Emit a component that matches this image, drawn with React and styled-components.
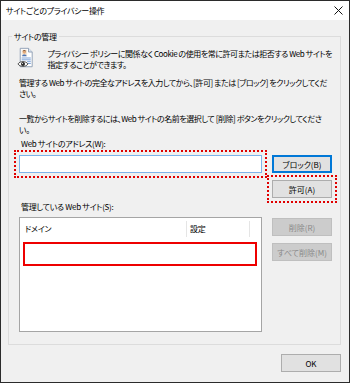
import React from 'react'
import styled, { createGlobalStyle } from 'styled-components'

const GlobalStyle = createGlobalStyle`
  html, body {
    margin: 0;
    padding: 0;
    background: #ffffff;
  }
`

const Window = styled.div`
  width: 350px;
  height: 383px;
  box-sizing: border-box;
  overflow: hidden;
  border: 1px solid #2b2b2b;
  background: #f0f0f0;
  display: flex;
  flex-direction: column;
  font-family: "Noto Sans CJK JP", "Liberation Sans", sans-serif;
  font-size: 8px;
  font-feature-settings: "palt";
  letter-spacing: -0.3px;
  line-height: 11px;
  color: #000;
`

const TitleBar = styled.div`
  height: 19px;
  flex: none;
  background: #ffffff;
  display: flex;
  align-items: center;
  justify-content: space-between;
  padding: 0 6px 0 5px;
`

const Body = styled.div`
  flex: 1;
  display: flex;
  flex-direction: column;
  padding: 11px 8px 0 7px;
`

const GroupBox = styled.fieldset`
  margin: 0;
  min-width: 0;
  padding: 0 8px 12px 10px;
  border: 1px solid #dcdcdc;
  display: flex;
  flex-direction: column;
`

const Legend = styled.legend`
  margin-left: -7px;
  padding: 0 2px;
  line-height: 11px;
`

const IntroRow = styled.div`
  display: flex;
  align-items: flex-start;
  margin-top: 5px;
  margin-left: -2px;
  gap: 12px;
`

const Paragraph = styled.p`
  margin: ${p => p.$top || 0}px 0 0 0;
  white-space: nowrap;
  letter-spacing: -0.45px;
`

const Label = styled.div`
  margin-top: ${p => p.$top || 0}px;
  margin-left: 2px;
  white-space: nowrap;
`

const Row = styled.div`
  display: flex;
  gap: 10px;
  margin-top: ${p => p.$top || 0}px;
  justify-content: ${p => (p.$end ? 'flex-end' : 'flex-start')};
`

const AddressInput = styled.input`
  width: 243px;
  height: 18px;
  box-sizing: border-box;
  border: 1px solid #7eb4ea;
  background: #ffffff;
  margin: 0;
  padding: 0 3px;
  font: inherit;
  outline: 2px dotted #e00000;
  outline-offset: 3px;
`

const Button = styled.button`
  width: ${p => p.$w || 60}px;
  height: 18px;
  box-sizing: border-box;
  margin: 0;
  padding: 0;
  font: inherit;
  font-feature-settings: "palt";
  white-space: nowrap;
  background: ${p => (p.disabled ? '#cccccc' : '#e1e1e1')};
  color: ${p => (p.disabled ? '#8a8a8a' : '#000')};
  border: 1px solid ${p => (p.disabled ? '#bfbfbf' : p.$default ? '#0078d7' : '#adadad')};
  box-shadow: ${p => (p.$default ? 'inset 0 0 0 1px #0078d7' : 'none')};
  outline: ${p => (p.$marked ? '2px dotted #e00000' : 'none')};
  outline-offset: 3px;
`

const ButtonColumn = styled.div`
  display: flex;
  flex-direction: column;
  gap: 7px;
  margin-top: 1px;
`

const ListView = styled.div`
  width: 243px;
  height: 115px;
  flex: none;
  box-sizing: border-box;
  border: 1px solid #a5a5a5;
  background: #ffffff;
  display: flex;
  flex-direction: column;
`

const ListHeader = styled.div`
  display: flex;
  height: 22px;
  align-items: center;
`

const HeaderCell = styled.div`
  width: ${p => p.$w}px;
  box-sizing: border-box;
  padding-left: ${p => p.$pad}px;
  border-right: 1px solid #e5e5e5;
  height: 16px;
  line-height: 16px;
`

const MarkedRow = styled.div`
  width: 234px;
  height: 24px;
  box-sizing: border-box;
  margin: 2px 0 0 3px;
  border: 2px solid #ee0000;
`

const Footer = styled.div`
  display: flex;
  justify-content: flex-end;
  margin-top: 9px;
`

const CloseIcon = () => (
  <svg width="9" height="9" viewBox="0 0 9 9">
    <path d="M0.5 0.5 L8.5 8.5 M8.5 0.5 L0.5 8.5" stroke="#111" strokeWidth="1" />
  </svg>
)

const PrivacyIcon = () => (
  <svg width="20" height="22" viewBox="0 0 20 22">
    <path d="M3.5 0.5 H12.5 L16.5 4.5 V20.5 H3.5 Z" fill="#ffffff" stroke="#8d9db3" />
    <path d="M12.5 0.5 V4.5 H16.5" fill="#dbe5f1" stroke="#8d9db3" />
    <rect x="5" y="2" width="6" height="7" fill="#f3e6d6" />
    <path d="M5.5 9 C5.5 6.5 10.5 6.5 10.5 9 Z" fill="#4a74b8" />
    <circle cx="8" cy="4.6" r="1.8" fill="#e2a877" />
    <path d="M6.2 4.2 C6.2 2.2 9.8 2.2 9.8 4.2 L9 3.4 L7 3.4 Z" fill="#6b3b1c" />
    <path d="M5 11 H15 M5 13 H15 M11 15 H15 M12 17 H15" stroke="#6f9ad6" strokeWidth="1" />
    <path d="M1 17.5 C3.5 14 9.5 14 12 17.5 C9.5 21 3.5 21 1 17.5 Z" fill="#ffffff" stroke="#333" strokeWidth="0.9" />
    <circle cx="6.5" cy="17.5" r="2.2" fill="#2a2a2a" />
    <circle cx="6" cy="17" r="0.6" fill="#ffffff" />
  </svg>
)

const App = () => (
  <>
    <GlobalStyle />
    <Window>
      <TitleBar>
        <span>サイトごとのプライバシー操作</span>
        <CloseIcon />
      </TitleBar>
      <Body>
        <GroupBox>
          <Legend>サイトの管理</Legend>
          <IntroRow>
            <PrivacyIcon />
            <Paragraph $top={1}>
              プライバシー ポリシーに関係なく Cookie の使用を常に許可または拒否する Web サイトを
              <br />
              指定することができます。
            </Paragraph>
          </IntroRow>
          <Paragraph $top={7}>
            管理する Web サイトの完全なアドレスを入力してから、[許可] または [ブロック] をクリックしてくだ
            <br />
            さい。
          </Paragraph>
          <Paragraph $top={14}>
            一覧からサイトを削除するには、Web サイトの名前を選択して [削除] ボタンをクリックしてくださ
            <br />
            い。
          </Paragraph>
          <Label $top={3}>Web サイトのアドレス(W):</Label>
          <Row $top={6}>
            <AddressInput />
            <Button $default>ブロック(B)</Button>
          </Row>
          <Row $top={7} $end>
            <Button $marked>許可(A)</Button>
          </Row>
          <Label $top={3}>管理している Web サイト(S):</Label>
          <Row $top={5}>
            <ListView>
              <ListHeader>
                <HeaderCell $w={167} $pad={5}>ドメイン</HeaderCell>
                <HeaderCell $w={63} $pad={3}>設定</HeaderCell>
              </ListHeader>
              <MarkedRow />
            </ListView>
            <ButtonColumn>
              <Button disabled>削除(R)</Button>
              <Button disabled>すべて削除(M)</Button>
            </ButtonColumn>
          </Row>
        </GroupBox>
        <Footer>
          <Button>OK</Button>
        </Footer>
      </Body>
    </Window>
  </>
)

export default App
